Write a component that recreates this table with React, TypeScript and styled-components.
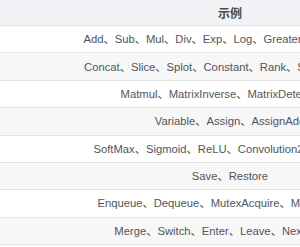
import React from "react";
import styled, { createGlobalStyle } from "styled-components";

const Global = createGlobalStyle`
  html, body { margin: 0; padding: 0; background: #ffffff; overflow: hidden; }
  body { font-family: "Liberation Sans", "Noto Sans CJK SC", sans-serif; }
`;

const Table = styled.div`
  width: 460px;
  display: flex;
  flex-direction: column;
`;

const HeaderRow = styled.div`
  height: 25px;
  background: #f0f2f5;
  border-bottom: 1px solid #e2e4e8;
  display: flex;
  align-items: center;
  justify-content: center;
  font-size: 12px;
  font-weight: bold;
  color: #4a4a4a;
  font-family: "Noto Sans CJK SC", sans-serif;
`;

const Row = styled.div<{ $striped: boolean }>`
  height: 26.375px;
  background: ${(p) => (p.$striped ? "#f7f7f7" : "#ffffff")};
  border-bottom: 1px solid #e4e4e4;
  display: flex;
  align-items: center;
  justify-content: center;
  white-space: nowrap;
  font-size: 11.25px;
  line-height: 14px;
  color: #52555c;
`;

const rows = [
  "Add、Sub、Mul、Div、Exp、Log、Greater、Less、Equal",
  "Concat、Slice、Splot、Constant、Rank、Shape、Shuffle",
  "Matmul、MatrixInverse、MatrixDeterminant",
  "Variable、Assign、AssignAdd",
  "SoftMax、Sigmoid、ReLU、Convolution2D、MaxPool",
  "Save、Restore",
  "Enqueue、Dequeue、MutexAcquire、MutexRelease",
  "Merge、Switch、Enter、Leave、NextIteration",
];

export default function App() {
  return (
    <>
      <Global />
      <Table>
        <HeaderRow>示例</HeaderRow>
        {rows.map((r, i) => (
          <Row key={i} $striped={i % 2 === 1}>
            {r}
          </Row>
        ))}
      </Table>
    </>
  );
}
